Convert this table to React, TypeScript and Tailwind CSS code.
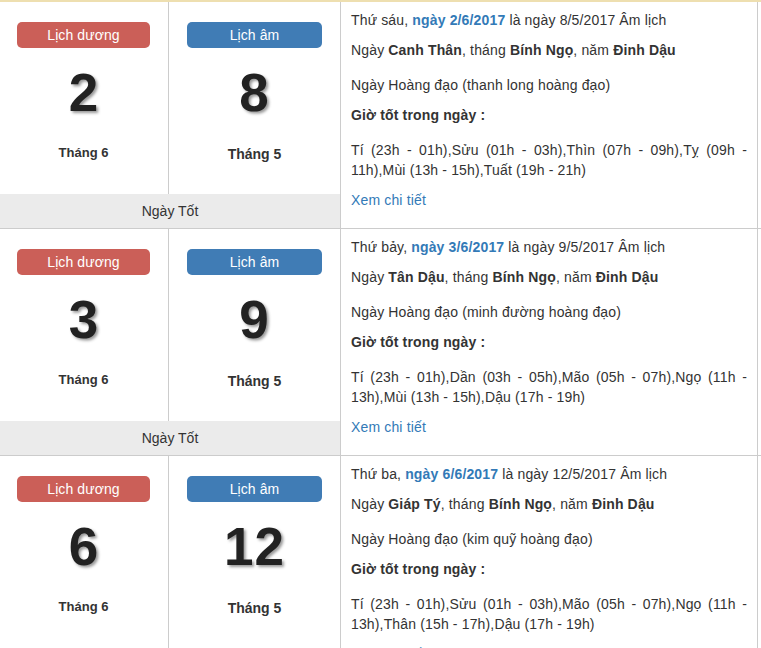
import React from "react";

type Row = {
  weekday: string;
  solarDate: string;
  lunarDate: string;
  dayName: string;
  monthName: string;
  yearName: string;
  hoangDao: string;
  hours: string;
  solarDay: string;
  solarMonth: string;
  lunarDay: string;
  lunarMonth: string;
};

const rows: Row[] = [
  {
    weekday: "Thứ sáu",
    solarDate: "ngày 2/6/2017",
    lunarDate: "8/5/2017",
    dayName: "Canh Thân",
    monthName: "Bính Ngọ",
    yearName: "Đinh Dậu",
    hoangDao: "thanh long hoàng đạo",
    hours:
      "Tí (23h - 01h),Sửu (01h - 03h),Thìn (07h - 09h),Tỵ (09h - 11h),Mùi (13h - 15h),Tuất (19h - 21h)",
    solarDay: "2",
    solarMonth: "Tháng 6",
    lunarDay: "8",
    lunarMonth: "Tháng 5",
  },
  {
    weekday: "Thứ bảy",
    solarDate: "ngày 3/6/2017",
    lunarDate: "9/5/2017",
    dayName: "Tân Dậu",
    monthName: "Bính Ngọ",
    yearName: "Đinh Dậu",
    hoangDao: "minh đường hoàng đạo",
    hours:
      "Tí (23h - 01h),Dần (03h - 05h),Mão (05h - 07h),Ngọ (11h - 13h),Mùi (13h - 15h),Dậu (17h - 19h)",
    solarDay: "3",
    solarMonth: "Tháng 6",
    lunarDay: "9",
    lunarMonth: "Tháng 5",
  },
  {
    weekday: "Thứ ba",
    solarDate: "ngày 6/6/2017",
    lunarDate: "12/5/2017",
    dayName: "Giáp Tý",
    monthName: "Bính Ngọ",
    yearName: "Đinh Dậu",
    hoangDao: "kim quỹ hoàng đạo",
    hours:
      "Tí (23h - 01h),Sửu (01h - 03h),Mão (05h - 07h),Ngọ (11h - 13h),Thân (15h - 17h),Dậu (17h - 19h)",
    solarDay: "6",
    solarMonth: "Tháng 6",
    lunarDay: "12",
    lunarMonth: "Tháng 5",
  },
];

function DayRow({ r }: { r: Row }) {
  return (
    <div className="flex border-b border-[#cccccc]">
      <div className="w-[341px] shrink-0 flex flex-col border-r border-[#cccccc]">
        <div className="flex h-[192px]">
          <div className="w-[169px] border-r border-[#cccccc] flex flex-col items-center pl-[17px] pr-[18px] pt-[20px]">
            <div className="w-full h-[26px] rounded-[5px] bg-[#cb5f58] text-white text-[14px] leading-[26px] text-center tracking-[0.1px]">
              Lịch dương
            </div>
            <div className="mt-[15px] h-[60px] text-[53px] leading-[60px] font-bold text-[#222] [text-shadow:2px_2px_3px_#999]">
              {r.solarDay}
            </div>
            <div className="mt-[20px] text-[13px] leading-[20px] font-bold text-[#333]">
              {r.solarMonth}
            </div>
          </div>
          <div className="flex-1 flex flex-col items-center pl-[18px] pr-[18px] pt-[20px]">
            <div className="w-full h-[26px] rounded-[5px] bg-[#407cb5] text-white text-[14px] leading-[26px] text-center tracking-[0.1px]">
              Lịch âm
            </div>
            <div className="mt-[15px] h-[60px] text-[53px] leading-[60px] font-bold text-[#222] tracking-[1px] [text-shadow:2px_2px_3px_#999]">
              {r.lunarDay}
            </div>
            <div className="mt-[21px] text-[14px] leading-[20px] font-bold text-[#333]">
              {r.lunarMonth}
            </div>
          </div>
        </div>
        <div className="h-[34px] bg-[#ebebeb] text-[14px] leading-[34px] text-center text-[#333]">
          Ngày Tốt
        </div>
      </div>
      <div className="w-[417px] shrink-0 border-r border-[#cccccc] px-[10px] pt-[8px] pb-[16px] text-[14px] leading-[20px] text-[#333] tracking-[0.15px]">
        <p>
          {r.weekday}, <b className="text-[#337ab7]">{r.solarDate}</b> là ngày{" "}
          {r.lunarDate} Âm lịch
        </p>
        <p className="mt-[10px]">
          Ngày <b>{r.dayName}</b>, tháng <b>{r.monthName}</b>, năm{" "}
          <b>{r.yearName}</b>
        </p>
        <p className="mt-[15px]">Ngày Hoàng đạo ({r.hoangDao})</p>
        <p className="mt-[10px] font-bold">Giờ tốt trong ngày :</p>
        <p className="mt-[15px] text-justify">{r.hours}</p>
        <p className="mt-[10px] text-[#337ab7]">Xem chi tiết</p>
      </div>
    </div>
  );
}

export default function App() {
  return (
    <div className="w-[761px] bg-white font-['Liberation_Sans',Arial,sans-serif]">
      <div className="h-[2px] bg-[#eedfb0]" />
      {rows.map((r) => (
        <DayRow key={r.solarDate} r={r} />
      ))}
    </div>
  );
}
